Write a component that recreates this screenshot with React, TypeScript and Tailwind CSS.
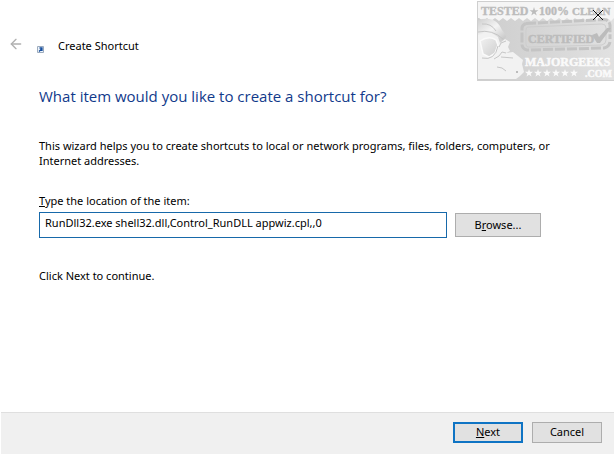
import { ArrowLeft } from "lucide-react";

function Badge() {
  return (
    <svg width="137" height="81" viewBox="477 0 137 81" role="img" aria-label="Tested 100% clean, certified by MajorGeeks.com">
      <defs>
        <linearGradient id="bg" x1="0" y1="0" x2="1" y2="0">
          <stop offset="0" stopColor="#cdcdcd" />
          <stop offset="0.45" stopColor="#d6d6d6" />
          <stop offset="1" stopColor="#e2e2e2" />
        </linearGradient>
        <linearGradient id="helmet" x1="0" y1="0" x2="1" y2="1">
          <stop offset="0" stopColor="#cfcfcf" />
          <stop offset="0.5" stopColor="#f4f4f4" />
          <stop offset="1" stopColor="#c2c2c2" />
        </linearGradient>
        <linearGradient id="lens" x1="0" y1="0" x2="1" y2="1">
          <stop offset="0" stopColor="#f2f2f2" />
          <stop offset="1" stopColor="#cdcdcd" />
        </linearGradient>
      </defs>
      <rect x="477.500" y="1.500" width="140" height="79" fill="url(#bg)" stroke="#cfcfcf" />
      <path d="M478 2H614V18l-3 3-4-3-4 3-4-3-4 3-4-3-4 3-4-3-4 3-4-3-4 3-4-3-4 3-4-3-4 3-4-3-4 3-4-3-4 3-4-3-4 3-4-3-4 3-4-3-4 3-4-3-4 3-4-3-4 3-4-3-4 3-4-3-4 3-4-3H478Z" fill="#f5f5f5" />
      <path d="M478 20c10-3 19-1 23 8 2 4 5 6 5 9l-3 3-11-5-8 1-6-1Z" fill="url(#helmet)" />
      <path d="M478 35l12-3 8 5 2 6 5-4 5 3-2 5 2 4-4 2 7-1 10 8-1 4 1 4 1 4-4 4-4 3h-38Z" fill="#f2f2f2" />
      <path d="M480 41q9-6 16-1l2 5-3 8-6 4-6-3Z" fill="url(#lens)" stroke="#fafafa" strokeWidth="1.500" />
      <path d="M478 32q14-3 25 7M482 24q9-1 14 7M482 58q13 3 16-12M499 47l2-4 5-2M494 59l5-3 3-4 4 1M501 57l12 1M497 67l5 1 4 3" fill="none" stroke="#c6c6c6" />
      <circle cx="517" cy="72" r="1" fill="#aaa" />
      <g fontFamily="Liberation Serif" fontWeight="700" fill="#bcbcbc" stroke="#bcbcbc" strokeWidth=".4">
        <text x="481" y="15" fontSize="12">TESTED</text>
        <text x="539" y="15" fontSize="12">100%</text>
        <text x="572" y="15" fontSize="11">CLEAN</text>
      </g>
      <path d="M534 7l1 3.200h3.400l-2.700 2 1 3.200-2.700-2-2.700 2 1-3.200-2.700-2h3.400Z" fill="#bcbcbc" />
      <path d="M526 23.500L604 19.500Q609 20 610 25V39M610 42Q609 47 604 48L527 50Q522 49 522 44V28Q522 25 526 23.500" fill="none" stroke="#c4c4c4" strokeWidth="3" strokeDasharray="10 2" />
      <path d="M528 27L602 24Q606 24 606 28V40Q606 44 602 45L528 47Q526 47 526 44V30Q526 27 528 27Z" fill="none" stroke="#cdcdcd" />
      <text x="528" y="43" fontSize="12" fontFamily="Liberation Serif" fontWeight="700" fill="#bcbcbc" stroke="#bcbcbc" strokeWidth=".5">CERTIFIED</text>
      <path d="M592 35l5-2 2 4 8-9h4l-11 15h-3Z" fill="#bcbcbc" />
      <g fontFamily="Liberation Serif" fontWeight="700" fill="#fafafa" stroke="#fafafa" strokeWidth=".5">
        <text x="525" y="66" fontSize="12">MAJORGEEKS</text>
        <text x="585" y="77" fontSize="10">.COM</text>
      </g>
      {[529, 538, 547, 556, 565, 574].map((x) => (
        <path key={x} transform={`translate(${x} 73)`} d="M0-4L1-1.200H4L1.600.7 2.500 3.500 0 1.800-2.500 3.500-1.600.7-4-1.200h3Z" fill="#fafafa" />
      ))}
    </svg>
  );
}

export default function App() {
  return (
    <main className="relative flex min-h-screen flex-col bg-white font-['Noto_Sans',sans-serif] text-[11px] text-black">
      <div className="absolute top-0 right-0">
        <Badge />
        <button aria-label="Close" className="absolute top-[10px] right-[11px]">
          <svg width="10" height="10" viewBox="0 0 10 10" stroke="#111"><path d="M0 0l10 10M10 0L0 10" /></svg>
        </button>
      </div>
      <header className="flex h-[54px] items-end pl-2">
        <button aria-label="Back" className="mb-[2px] text-[#b0b0b0]"><ArrowLeft size={16} /></button>
        <svg className="mb-px ml-[13px]" width="7" height="7" viewBox="0 0 7 7"><path d="M.5.5h6v6h-6Z" fill="#eef4fb" stroke="#9cabbd" /><path d="M2 5.500L4.500 3M2.500 2H5v3" fill="none" stroke="#174f9e" strokeWidth="1.300" /></svg>
        <span className="ml-[14px] leading-4">Create Shortcut</span>
      </header>
      <section className="flex-1 pl-[39px] pt-8">
        <h1 className="font-['Open_Sans',sans-serif] text-[15px] leading-5 text-[#113a8b]">What item would you like to create a shortcut for?</h1>
        <p className="mt-8 max-w-[530px] leading-[15px]">This wizard helps you to create shortcuts to local or network programs, files, folders, computers, or Internet addresses.</p>
        <label htmlFor="location" className="mt-[25px] block leading-4"><u>T</u>ype the location of the item:</label>
        <div className="mt-[3px] flex items-center gap-2">
          <input id="location" defaultValue="RunDll32.exe shell32.dll,Control_RunDLL appwiz.cpl,,0" className="h-[26px] w-[408px] border border-[#1769aa] px-[5px] pb-[5px] outline-none" />
          <button className="h-6 w-[86px] border border-[#adadad] bg-[#e1e1e1]">B<u>r</u>owse...</button>
        </div>
        <p className="mt-[30px] leading-4">Click Next to continue.</p>
      </section>
      <footer className="ml-px flex h-[42px] items-start justify-end gap-[9px] border-t border-[#dfdfdf] bg-[#f0f0f0] pt-[9px] pr-3">
        <button className="h-[21px] w-[70px] border-2 border-[#0f74c4] bg-[#e1e1e1]"><u>N</u>ext</button>
        <button className="h-[21px] w-[70px] border border-[#adadad] bg-[#e1e1e1]">Cancel</button>
      </footer>
    </main>
  );
}
